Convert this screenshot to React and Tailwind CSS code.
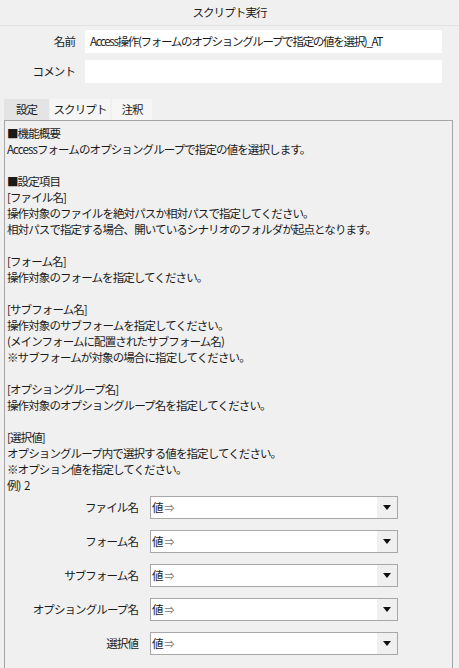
import React from 'react';

const lines = [
  '■機能概要',
  'Accessフォームのオプショングループで指定の値を選択します。',
  '',
  '■設定項目',
  '[ファイル名]',
  '操作対象のファイルを絶対パスか相対パスで指定してください。',
  '相対パスで指定する場合、開いているシナリオのフォルダが起点となります。',
  '',
  '[フォーム名]',
  '操作対象のフォームを指定してください。',
  '',
  '[サブフォーム名]',
  '操作対象のサブフォームを指定してください。',
  '(メインフォームに配置されたサブフォーム名)',
  '※サブフォームが対象の場合に指定してください。',
  '',
  '[オプショングループ名]',
  '操作対象のオプショングループ名を指定してください。',
  '',
  '[選択値]',
  'オプショングループ内で選択する値を指定してください。',
  '※オプション値を指定してください。',
  '例)\u00a0\u00a02',
];

const fields = ['ファイル名', 'フォーム名', 'サブフォーム名', 'オプショングループ名', '選択値'];

const ValueSelect = ({ label }) => (
  <div className="flex items-center h-[23px]">
    <div className="w-[131px] text-right whitespace-nowrap">{label}</div>
    <div className="ml-[12px] w-[248px] h-[23px] flex border border-[#a8a8a8] bg-white">
      <div className="flex-1 flex items-center pl-[1px]">
        値<span className="text-[#777] text-[10px] ml-[2px]">⇒</span>
      </div>
      <div className="w-[20px] h-full bg-[#f0f0f0] flex items-center justify-center">
        <svg width="8" height="5" viewBox="0 0 8 5">
          <path d="M0 0 H8 L4 5 Z" fill="#111" />
        </svg>
      </div>
    </div>
  </div>
);

export default function App() {
  return (
    <div className="w-[459px] h-[668px] overflow-hidden bg-[#f0f0f0] text-[11.5px] tracking-[-0.9px] text-[#1a1a1a] font-['Noto_Sans_CJK_JP',sans-serif]">
      <div className="h-[26px] flex items-center justify-center border-b border-[#e2e2e2]">
        スクリプト実行
      </div>

      <div className="pt-[4px] flex flex-col gap-[7px]">
        <div className="flex items-center">
          <div className="w-[75px] text-right">名前</div>
          <div className="ml-[10px] w-[357px] h-[23px] bg-white flex items-center pl-[5px] tracking-[-1.3px]">
            Access操作(フォームのオプショングループで指定の値を選択)_AT
          </div>
        </div>
        <div className="flex items-center">
          <div className="w-[75px] text-right">コメント</div>
          <div className="ml-[10px] w-[357px] h-[23px] bg-white" />
        </div>
      </div>

      <div className="mt-[16px] pl-[4px] flex items-end h-[21px]">
        <div className="w-[45px] h-[21px] flex items-center justify-center bg-[#e4e4e4]">設定</div>
        <div className="ml-[1px] w-[60px] h-[21px] flex items-center justify-center bg-[#f6f6f6]">スクリプト</div>
        <div className="ml-[2px] w-[40px] h-[21px] flex items-center justify-center bg-[#f6f6f6]">注釈</div>
      </div>

      <div className="ml-[4px] w-[449px] h-[560px] border border-[#a5a5a5] pt-[4px] pl-[2px]">
        <div className="leading-[16px]">
          {lines.map((l, i) => (
            <div key={i} className="h-[16px] whitespace-nowrap">{l}</div>
          ))}
        </div>
        <div className="mt-[3px] flex flex-col gap-[11px]">
          {fields.map((f) => (
            <ValueSelect key={f} label={f} />
          ))}
        </div>
      </div>
    </div>
  );
}
